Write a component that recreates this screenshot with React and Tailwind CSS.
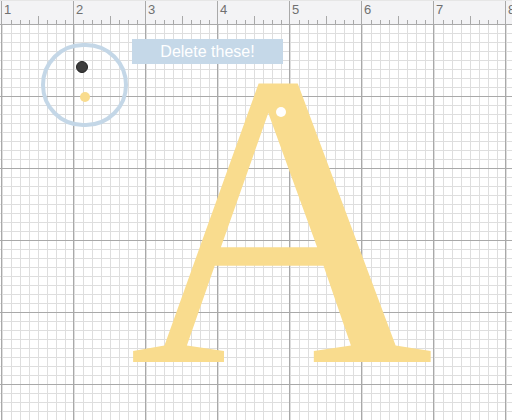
import React from "react";

const labels = [1, 2, 3, 4, 5, 6, 7, 8];

function RulerTicks() {
  // minor ticks every 9px, half-inch tick taller
  return (
    <svg width="72" height="24" className="absolute left-0 top-0">
      {[9, 18, 27, 36, 45, 54, 63].map((x) => (
        <line
          key={x}
          x1={x + 0.5}
          x2={x + 0.5}
          y1={x === 36 ? 15 : 19}
          y2={24}
          stroke="#a9a9a9"
          strokeWidth="1"
        />
      ))}
    </svg>
  );
}

function Grid() {
  return (
    <svg width="512" height="396" className="absolute left-0 top-0">
      <defs>
        <pattern id="minor" x="1" y="0" width="9" height="9" patternUnits="userSpaceOnUse">
          <path d="M0.5 0V9M0 0.5H9" stroke="#dedede" strokeWidth="1" fill="none" />
        </pattern>
        <pattern id="major" x="1" y="0" width="72" height="72" patternUnits="userSpaceOnUse">
          <rect width="72" height="72" fill="url(#minor)" />
          <path d="M0.5 0V72M0 0.5H72" stroke="#a9a9a9" strokeWidth="1" fill="none" />
        </pattern>
      </defs>
      <rect x="0" y="0" width="512" height="396" fill="url(#major)" />
    </svg>
  );
}

export default function App() {
  return (
    <div
      className="w-[512px] h-[420px] overflow-hidden bg-white flex flex-col"
      style={{ fontFamily: "'Liberation Sans', Arial, sans-serif" }}
    >
      {/* Ruler */}
      <div className="h-6 shrink-0 bg-[#f3f3f5] border-t border-[#e6e6e6] flex pl-px overflow-hidden">
        {labels.map((n) => (
          <div
            key={n}
            className="relative w-[72px] shrink-0 border-l border-[#a9a9a9] h-full"
          >
            <RulerTicks />
            <span className="absolute left-[2px] top-[2px] text-[13px] leading-none text-[#707070]">
              {n}
            </span>
          </div>
        ))}
      </div>

      {/* Canvas */}
      <div className="relative flex-1">
        <Grid />

        {/* Selection ring with handles */}
        <div className="absolute left-[41px] top-[19px] w-[87px] h-[84px] rounded-full border-4 border-[#c4d7e7]" />
        <div className="absolute left-[76px] top-[37px] w-3 h-3 rounded-full bg-[#3c3c3c] border border-[#222]" />
        <div className="absolute left-[80px] top-[68px] w-[10px] h-[10px] rounded-full bg-[#f9dc8e]" />

        <div className="absolute left-[132px] top-[15px] w-[151px] h-[25px] bg-[#c5d8e8] flex items-center justify-center text-white text-base leading-none">
          Delete these!
        </div>

        {/* Letter */}
        <span
          className="absolute left-[129px] top-[-15px] text-[422px] leading-none text-[#f9dc8e] select-none"
          style={{ fontFamily: "'Liberation Serif', 'Times New Roman', serif" }}
        >
          A
        </span>
        <div className="absolute left-[276px] top-[83px] w-[10px] h-[10px] rounded-full bg-white" />
      </div>
    </div>
  );
}
